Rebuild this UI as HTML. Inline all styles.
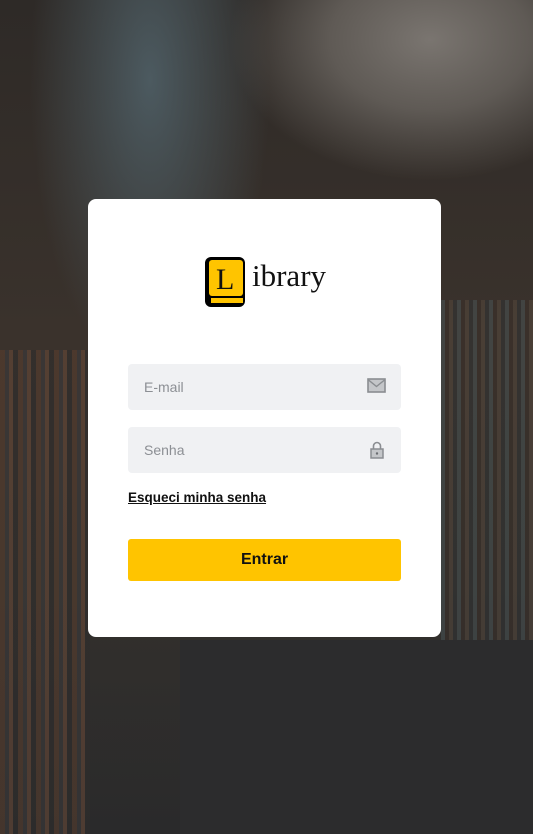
<!DOCTYPE html>
<html><head><meta charset="utf-8"><style>
*{margin:0;padding:0;box-sizing:border-box}
body{width:533px;height:834px;overflow:hidden;position:relative;font-family:"Liberation Sans",Roboto,sans-serif;
background:
radial-gradient(ellipse 200px 140px at 430px 40px,#7a7570 0%,#5f5a55 50%,rgba(60,55,50,0) 100%),
radial-gradient(ellipse 120px 300px at 150px 80px,#4c5a60 0%,rgba(50,55,58,0) 100%),
linear-gradient(180deg,#2e2a27 0%,#3a322c 40%,#33302c 70%,#2a2a2b 100%);}
.shelfL{position:absolute;left:0;top:350px;width:90px;height:484px;background:repeating-linear-gradient(90deg,#5a3e2e 0 5px,#3b3a3c 5px 9px,#6b4a38 9px 13px,#2e2c2b 13px 18px);opacity:.55}
.shelfR{position:absolute;left:441px;top:300px;width:92px;height:380px;background:repeating-linear-gradient(90deg,#4c5a5c 0 4px,#3a2e28 4px 8px,#5b4c40 8px 12px,#2e3236 12px 16px);opacity:.45}
.floor{position:absolute;left:180px;top:640px;width:353px;height:194px;background:#2c2c2d}
.card{position:absolute;left:88px;top:199px;width:353px;height:438px;background:#fff;border-radius:8px}
.logo{position:absolute;left:115px;top:56px}
.ib{position:absolute;left:164px;top:59px;font-family:"Liberation Serif",serif;font-size:31px;color:#111}
.inp{position:absolute;left:40px;width:273px;height:46px;background:#f0f1f3;border-radius:4px;color:#8c8f94;font-size:14px;padding:15px 16px}
.inp svg{position:absolute;right:15px;top:14px}
.link{position:absolute;left:40px;top:291px;font-size:13.5px;font-weight:bold;color:#111;text-decoration:underline}
.btn{position:absolute;left:40px;top:340px;width:273px;height:42px;background:#ffc400;border-radius:3px;text-align:center;line-height:42px;font-weight:bold;font-size:16px;color:#111}
</style></head><body>
<div class="shelfL"></div><div class="shelfR"></div><div class="floor"></div>
<div class="card">
<svg class="logo" width="46" height="54" viewBox="0 0 46 54">
<rect x="2" y="2" width="40" height="50" rx="6" fill="#000"/>
<rect x="6" y="5" width="34" height="36" rx="3" fill="#ffc400"/>
<rect x="8" y="43" width="32" height="5" fill="#ffc400"/>
<text x="13" y="34" font-family="Liberation Serif,serif" font-size="30" fill="#111">L</text>
</svg>
<div class="ib">ibrary</div>
<div class="inp" style="top:165px">E-mail<svg width="19" height="15" viewBox="0 0 19 15"><rect x="1" y="1" width="17" height="13" fill="#c4c6c9" stroke="#8a8d91" stroke-width="1.6"/><path d="M1.5 2 L9.5 8.5 L17.5 2" fill="none" stroke="#8a8d91" stroke-width="1.4"/></svg></div>
<div class="inp" style="top:228px">Senha<svg width="14" height="18" viewBox="0 0 14 18" style="top:14px;right:17px"><path d="M3.5 8 V5 a3.5 3.5 0 0 1 7 0 V8" fill="none" stroke="#8a8d91" stroke-width="1.6"/><rect x="1" y="8" width="12" height="9" fill="#c4c6c9" stroke="#8a8d91" stroke-width="1.5"/><circle cx="7" cy="12.5" r="1.2" fill="#6a6d71"/></svg></div>
<div class="link">Esqueci minha senha</div>
<div class="btn">Entrar</div>
</div>
</body></html>
